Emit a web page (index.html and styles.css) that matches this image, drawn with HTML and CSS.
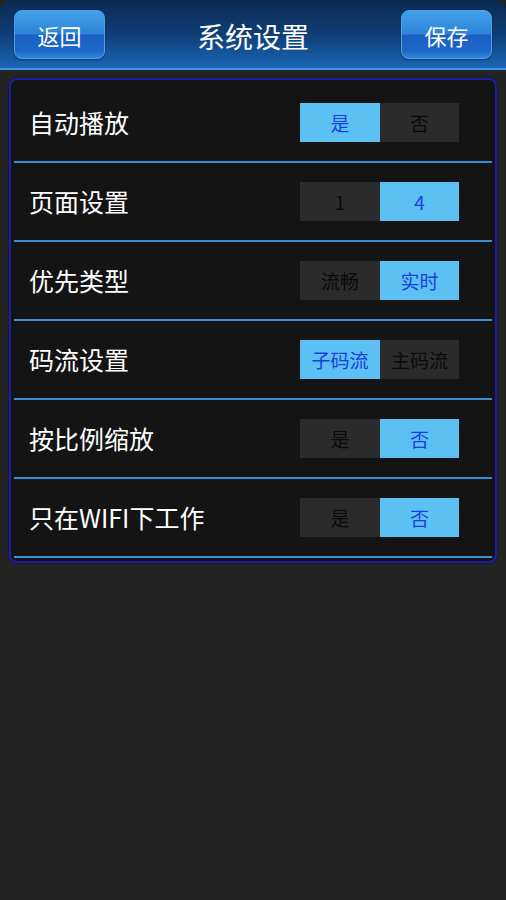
FILE: index.html
```html
<!DOCTYPE html>
<html lang="zh">
<head>
<meta charset="utf-8">
<title>系统设置</title>
<link rel="stylesheet" href="styles.css">
</head>
<body>
<header class="topbar">
  <button class="nav-btn">返回</button>
  <h1 class="title">系统设置</h1>
  <button class="nav-btn">保存</button>
</header>
<main class="panel">
  <div class="row">
    <span class="label">自动播放</span>
    <div class="seg"><span class="opt on">是</span><span class="opt">否</span></div>
  </div>
  <div class="row">
    <span class="label">页面设置</span>
    <div class="seg"><span class="opt">1</span><span class="opt on">4</span></div>
  </div>
  <div class="row">
    <span class="label">优先类型</span>
    <div class="seg"><span class="opt">流畅</span><span class="opt on">实时</span></div>
  </div>
  <div class="row">
    <span class="label">码流设置</span>
    <div class="seg"><span class="opt on">子码流</span><span class="opt">主码流</span></div>
  </div>
  <div class="row">
    <span class="label">按比例缩放</span>
    <div class="seg"><span class="opt">是</span><span class="opt on">否</span></div>
  </div>
  <div class="row">
    <span class="label">只在WIFI下工作</span>
    <div class="seg"><span class="opt">是</span><span class="opt on">否</span></div>
  </div>
</main>
</body>
</html>
```
FILE: styles.css
```css
html, body {
  margin: 0;
  padding: 0;
}
body {
  background: #242424;
  min-height: 900px;
  font-family: "Noto Sans CJK SC", "Noto Sans", sans-serif;
}
.topbar {
  height: 70px;
  border-bottom: 2px solid #3b97e6;
  border-radius: 12px 12px 0 0;
  background: linear-gradient(to bottom, #0b2a52 0%, #0f3e76 50%, #1b66b6 100%);
  display: flex;
  align-items: flex-start;
  justify-content: space-between;
  padding: 10px 14px 0 14px;
  box-sizing: border-box;
}
.nav-btn {
  width: 91px;
  height: 49px;
  border: 1px solid #4aa2ea;
  border-radius: 8px;
  background: linear-gradient(to bottom, #44a0ea 0%, #2d84d8 48%, #1a5fc2 52%, #1d68c8 85%, #2f86db 100%);
  color: #ffffff;
  font-family: "Noto Sans CJK SC", sans-serif;
  font-size: 22px;
  padding: 0;
  line-height: 1;
  box-shadow: 0 1px 2px rgba(0, 0, 0, 0.4);
}
.title {
  margin: 0;
  color: #ffffff;
  font-size: 28px;
  font-weight: normal;
  line-height: 52px;
}
.panel {
  margin: 8px 9px 0 9px;
  border: 2px solid #1d1da6;
  border-radius: 8px;
  background: #141414;
  padding: 4px 3px 3px 3px;
  box-shadow: 0 0 2px #0b0b5a;
}
.row {
  height: 77px;
  border-bottom: 2px solid #3a8fd2;
  display: flex;
  align-items: center;
  justify-content: space-between;
  padding: 0 33px 0 15px;
}
.label {
  color: #ffffff;
  font-size: 25px;
  line-height: 1;
}
.seg {
  display: flex;
  height: 39px;
}
.opt {
  width: 80px;
  background: #2b2b2b;
  color: #0a0a0a;
  font-size: 19px;
  display: flex;
  align-items: center;
  justify-content: center;
}
.opt + .opt {
  width: 79px;
}
.opt.on {
  background: #5cc1f2;
  color: #1b3fdc;
}
```
